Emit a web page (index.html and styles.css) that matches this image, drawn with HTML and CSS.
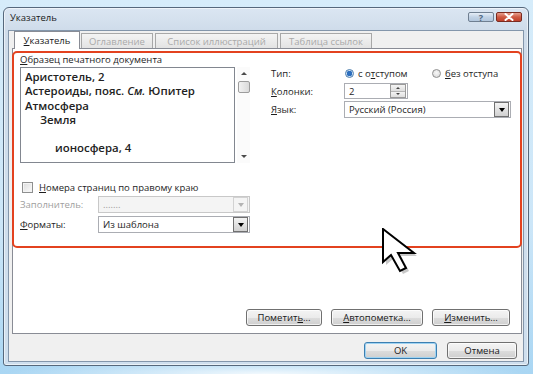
FILE: index.html
```html
<!DOCTYPE html>
<html lang="ru">
<head>
<meta charset="utf-8">
<title>Указатель</title>
<link rel="stylesheet" href="styles.css">
</head>
<body>
<div class="window">
  <div class="titlebar">
    <span class="title">Указатель</span>
    <div class="caption-btns">
      <span class="cbtn help">?</span>
      <span class="cbtn close"><svg width="10" height="8" viewBox="0 0 10 8"><path d="M1.5 1 L8.5 7 M8.5 1 L1.5 7" stroke="#fff" stroke-width="2" stroke-linecap="round"/></svg></span>
    </div>
  </div>
  <div class="client">
    <div class="tabs">
      <div class="tab active"><span><u>У</u>казатель</span></div>
      <div class="tab t2">Оглавление</div>
      <div class="tab t3">Список иллюстраций</div>
      <div class="tab t4">Таблица ссылок</div>
    </div>
    <div class="panel">
      <div class="top">
        <div class="left">
          <div class="label"><u>О</u>бразец печатного документа</div>
          <div class="preview">
            <div class="listbox">
              <div class="li">Аристотель, 2</div>
              <div class="li">Астероиды, пояс. <i>См.</i> Юпитер</div>
              <div class="li">Атмосфера</div>
              <div class="li ind1">Земля</div>
              <div class="li blank"></div>
              <div class="li ind2">ионосфера, 4</div>
            </div>
            <div class="scrollbar">
              <span class="arr up"></span>
              <span class="thumb"></span>
              <span class="track"></span>
              <span class="arr down"></span>
            </div>
          </div>
          <div class="check-row">
            <span class="checkbox"></span>
            <span><u>Н</u>омера страниц по правому краю</span>
          </div>
          <div class="field disabled">
            <span class="flabel">Заполнитель:</span>
            <div class="combo small"><span class="ctext">.......</span><span class="dd"></span></div>
          </div>
          <div class="field">
            <span class="flabel"><u>Ф</u>орматы:</span>
            <div class="combo small"><span class="ctext">Из шаблона</span><span class="dd"></span></div>
          </div>
        </div>
        <div class="right">
          <div class="row r1">
            <span class="rlabel">Тип:</span>
            <span class="radio-opt first"><span class="radio on"></span><span>с о<u>т</u>ступом</span></span>
            <span class="radio-opt"><span class="radio"></span><span><u>б</u>ез отступа</span></span>
          </div>
          <div class="row r2">
            <span class="rlabel"><u>К</u>олонки:</span>
            <div class="spin"><span class="ctext">2</span><span class="spinbtns"><span class="sb up"></span><span class="sb down"></span></span></div>
          </div>
          <div class="row r3">
            <span class="rlabel"><u>Я</u>зык:</span>
            <div class="combo lang"><span class="ctext">Русский (Россия)</span><span class="dd"></span></div>
          </div>
        </div>
      </div>
      <div class="panel-btns">
        <span class="btn b1"><span>Пометит<u>ь</u>...</span></span>
        <span class="btn b2"><span><u>А</u>втопометка...</span></span>
        <span class="btn b3"><span><u>И</u>зменить...</span></span>
      </div>
      <div class="highlight"></div>
      <svg class="cursor" width="40" height="48" viewBox="0 0 40 48">
        <polygon points="4,4 4,37 12,30 21,46 27,43 19,28 35,28" fill="#9a9a9a" opacity="0.55"/>
        <polygon points="1,1 1,34 9,27 18,43 24,40 16,25 32,25" fill="#fff" stroke="#000" stroke-width="2" stroke-linejoin="miter"/>
      </svg>
    </div>
    <div class="dialog-btns">
      <span class="btn ok">OK</span>
      <span class="btn cancel">Отмена</span>
    </div>
  </div>
</div>
</body>
</html>
```

FILE: styles.css
```css
* { box-sizing: border-box; }
html, body { margin: 0; padding: 0; }
body {
  width: 533px;
  height: 374px;
  overflow: hidden;
  padding: 7px 0 0 3px;
  font-family: "Open Sans", "Noto Sans", sans-serif;
  font-size: 9.5px;
  color: #1e1e1e;
  background:
    radial-gradient(ellipse 260px 14px at 266px 374px, rgba(255,255,255,0.85), rgba(255,255,255,0) 100%),
    linear-gradient(to bottom, #d6ecfa 0%, #cce6f8 60%, #a9d6f3 100%);
}
u { text-decoration: underline; text-underline-offset: 1px; }

.window {
  width: 526px;
  height: 359px;
  border: 1px solid #56687c;
  border-radius: 6px 6px 3px 3px;
  background: linear-gradient(to bottom, #dbe6f2 0px, #cfdcea 22px, #cfdfee 100%);
  box-shadow: inset 0 0 0 1px rgba(255,255,255,0.55);
  padding: 0 4px 3px 4px;
  display: flex;
  flex-direction: column;
}

.titlebar {
  height: 22px;
  display: flex;
  align-items: center;
  padding: 0 2px 0 2px;
}
.title { font-size: 9.5px; color: #1a1a1a; margin-top: -3px; }
.caption-btns {
  margin-left: auto;
  align-self: flex-start;
  margin-top: 4px;
  display: flex;
  gap: 2px;
}
.cbtn {
  width: 26px;
  height: 10px;
  border: 1px solid #6f7f91;
  border-radius: 2px;
  display: flex;
  align-items: center;
  justify-content: center;
  font-size: 9px;
  font-weight: 700;
  line-height: 1;
}
.help {
  background: linear-gradient(to bottom, #e6eef7, #c2d3e6 50%, #b3c7dd);
  color: #4d6680;
}
.close {
  background: linear-gradient(to bottom, #e7a08f, #cf5a43 50%, #c0402b);
  border-color: #7a2b20;
}

.client {
  flex: 1;
  background: #f0f0f0;
  border: 1px solid #8396ab;
  display: flex;
  flex-direction: column;
}

.tabs {
  height: 17px;
  display: flex;
  padding-left: 5px;
  position: relative;
  z-index: 2;
}
.tab {
  height: 15px;
  margin-top: 2px;
  border: 1px solid #a8a8a8;
  border-bottom: none;
  background: linear-gradient(to bottom, #f4f4f4, #e3e3e3);
  color: #a9a9a9;
  display: flex;
  align-items: center;
  justify-content: center;
  margin-right: 2px;
}
.tab.active {
  width: 66px;
  height: 18px;
  margin-top: 0;
  background: #fff;
  color: #1a1a1a;
  border-color: #898c95;
  margin-right: 1px;
}
.t2 { width: 72px; }
.t3 { width: 123px; }
.t4 { width: 92px; }

.panel {
  position: relative;
  height: 286px;
  margin: 0 1px 0 3px;
  background: #fff;
  border: 1px solid #898c95;
  padding: 4px 11px 7px 7px;
  display: flex;
  flex-direction: column;
}

.top { display: flex; gap: 21px; }
.left { width: 230px; display: flex; flex-direction: column; }
.label { height: 13px; line-height: 13px; }

.preview { display: flex; gap: 2px; margin-top: 1px; height: 96px; }
.listbox {
  width: 215px;
  height: 96px;
  border: 1px solid #828790;
  padding: 2px 0 0 4px;
  font-size: 11.4px;
  font-weight: 600;
  color: #222;
  line-height: 14.3px;
}
.li { height: 14.3px; white-space: nowrap; }
.li i { font-style: italic; font-weight: 600; }
.ind1 { padding-left: 15px; }
.ind2 { padding-left: 30px; }

.scrollbar {
  width: 13px;
  height: 96px;
  display: flex;
  flex-direction: column;
  align-items: center;
  background: #fbfbfb;
}
.arr { width: 0; height: 0; border-left: 3px solid transparent; border-right: 3px solid transparent; }
.arr.up { border-bottom: 3px solid #4a4a4a; margin-top: 5px; }
.arr.down { border-top: 3px solid #4a4a4a; margin-bottom: 5px; }
.thumb {
  width: 12px;
  height: 12px;
  margin-top: 6px;
  border: 1px solid #9c9c9c;
  border-radius: 2px;
  background: linear-gradient(to right, #f2f2f2, #dadada);
}
.track { flex: 1; }

.check-row {
  margin-top: 18px;
  height: 12px;
  display: flex;
  align-items: center;
  gap: 6px;
  padding-left: 2px;
}
.checkbox {
  width: 11px;
  height: 11px;
  border: 1px solid #8e8f8f;
  background: linear-gradient(135deg, #dcdcdc, #fbfbfb);
  box-shadow: inset 0 0 0 1px #f4f4f4;
}

.field {
  margin-top: 3px;
  height: 17px;
  display: flex;
  align-items: center;
}
.flabel { width: 78px; }
.field.disabled .flabel { color: #a0a0a0; }

.combo {
  height: 17px;
  border: 1px solid #abadb3;
  background: #fff;
  display: flex;
  align-items: center;
  padding: 0 1px 0 4px;
}
.combo.small { width: 152px; }
.combo.lang { width: 167px; }
.ctext { flex: 1; white-space: nowrap; }
.dd {
  width: 15px;
  height: 15px;
  border: 1px solid #707070;
  background: linear-gradient(to bottom, #f3f3f3, #e2e2e2 50%, #d1d1d1);
  display: flex;
  align-items: center;
  justify-content: center;
}
.dd::after {
  content: "";
  border-left: 3.5px solid transparent;
  border-right: 3.5px solid transparent;
  border-top: 4px solid #000;
}
.field.disabled .combo { border-color: #c8c8c8; background: #f4f4f4; color: #9a9a9a; }
.field.disabled .dd { border-color: #d2d2d2; background: #f4f4f4; }
.field.disabled .dd::after { border-top-color: #b4b4b4; }

.right { width: 241px; padding-top: 14px; display: flex; flex-direction: column; }
.row { display: flex; align-items: center; }
.rlabel { width: 73px; }
.r1 { height: 13px; }
.r2 { margin-top: 3px; height: 16px; }
.r3 { margin-top: 2px; height: 17px; }
.radio-opt { display: flex; align-items: center; gap: 4px; white-space: nowrap; }
.radio-opt.first { width: 88px; padding-left: 1px; }
.radio {
  width: 9px;
  height: 9px;
  border-radius: 50%;
  border: 1px solid #8f8f8f;
  background: radial-gradient(circle at 50% 40%, #f8f8f8, #d6d6d6);
  position: relative;
}
.radio.on { border-color: #4d7fae; background: radial-gradient(circle, #2d6fbf 0 2.6px, #cfe0f1 3px); }

.spin {
  width: 64px;
  height: 16px;
  border: 1px solid #abadb3;
  display: flex;
  align-items: center;
  padding: 0 1px 0 4px;
}
.spinbtns { width: 16px; height: 14px; display: flex; flex-direction: column; border: 1px solid #9a9a9a; }
.sb {
  flex: 1;
  background: linear-gradient(to bottom, #f4f4f4, #dedede);
  display: flex;
  align-items: center;
  justify-content: center;
}
.sb.up { border-bottom: 1px solid #b5b5b5; }
.sb.up::after { content: ""; border-left: 2.5px solid transparent; border-right: 2.5px solid transparent; border-bottom: 2.5px solid #444; }
.sb.down::after { content: ""; border-left: 2.5px solid transparent; border-right: 2.5px solid transparent; border-top: 2.5px solid #444; }

.panel-btns {
  margin-top: auto;
  display: flex;
  justify-content: flex-end;
  gap: 9px;
}
.btn {
  height: 17px;
  border: 1px solid #707070;
  border-radius: 3px;
  background: linear-gradient(to bottom, #f4f4f4 0%, #ebebeb 50%, #dddddd 51%, #cfcfcf 100%);
  box-shadow: inset 0 0 0 1px rgba(255,255,255,0.7);
  display: flex;
  align-items: center;
  justify-content: center;
  color: #1a1a1a;
  white-space: nowrap;
}
.b1 { width: 76px; }
.b2 { width: 92px; }
.b3 { width: 78px; }

.dialog-btns {
  margin-top: 8px;
  display: flex;
  justify-content: flex-end;
  gap: 10px;
  padding-right: 6px;
}
.btn.ok {
  width: 73px;
  border-color: #3c7fb1;
  box-shadow: inset 0 0 0 1px #9fd3f2;
}
.btn.cancel { width: 70px; }

.highlight {
  position: absolute;
  left: -1px;
  top: 2px;
  width: 510px;
  height: 197px;
  border: 2px solid #e3421f;
  border-radius: 5px;
  pointer-events: none;
}
.cursor {
  position: absolute;
  left: 369px;
  top: 179px;
}
```
